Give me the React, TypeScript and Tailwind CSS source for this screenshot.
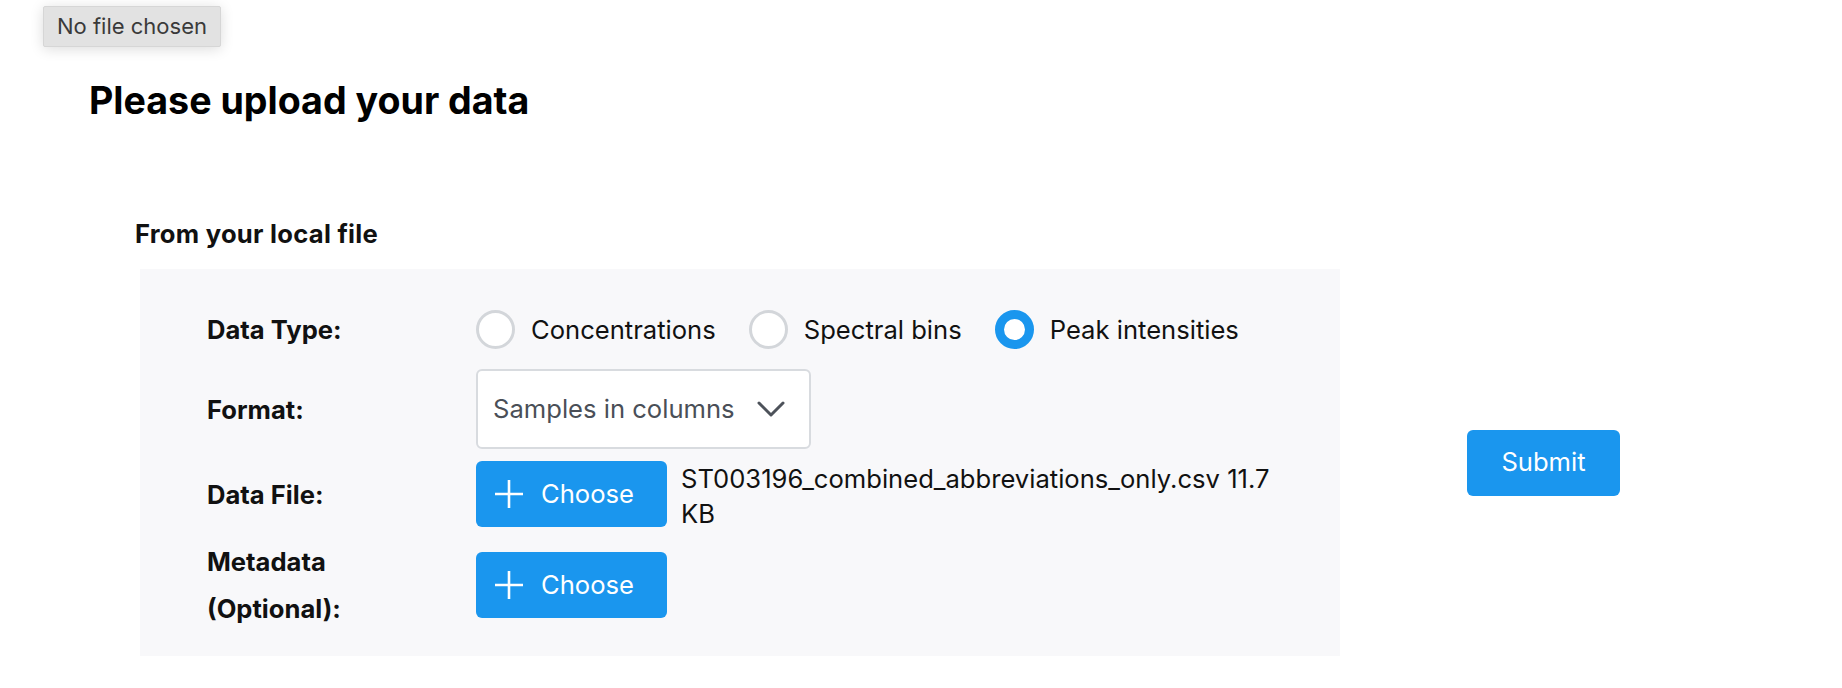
import * as React from "react";

const DATA_TYPES = ["Concentrations", "Spectral bins", "Peak intensities"];

function Radio({ label, checked }: { label: string; checked?: boolean }) {
  return (
    <label className="flex items-center gap-[16px]">
      <span
        className={
          checked
            ? "h-[39px] w-[39px] shrink-0 rounded-full border-[9px] border-[#1a96ee] bg-white"
            : "h-[39px] w-[39px] shrink-0 rounded-full border-[3px] border-[#d3d6da] bg-white"
        }
      />
      <span className="text-[25.6px] leading-[39px] text-[#111]">{label}</span>
    </label>
  );
}

function ChooseButton() {
  return (
    <button className="flex h-[66px] w-[191px] shrink-0 items-center rounded-[6px] bg-[#1a96ee] pl-[18px] text-white">
      <svg width="30" height="30" viewBox="0 0 30 30" fill="none" stroke="currentColor" strokeWidth="2.6">
        <path d="M15 1v28M1 15h28" />
      </svg>
      <span className="ml-[17px] text-[25.6px] leading-none">Choose</span>
    </button>
  );
}

function Row({ label, children, className = "" }: { label: string; children: React.ReactNode; className?: string }) {
  return (
    <div className={`flex items-center ${className}`}>
      <div className="w-[269px] shrink-0">
        <span className="block max-w-[200px] text-[25.6px] font-bold leading-[47px] text-[#111]">{label}</span>
      </div>
      {children}
    </div>
  );
}

export default function App() {
  return (
    <div className="min-h-screen bg-white font-['Inter','Liberation_Sans',sans-serif] text-black">
      <div className="pl-[43px] pt-[6px]">
        <div className="flex h-[41px] w-[178px] items-center justify-center rounded-[2px] border border-[#d6d6d6] bg-[#e2e2e2] text-[22px] text-[#3a3a3a] shadow-[0_2px_14px_rgba(0,0,0,0.14)]">
          No file chosen
        </div>
      </div>

      <h1 className="ml-[89px] mt-[31px] text-[37.6px] font-bold leading-[46px]">Please upload your data</h1>

      <h3 className="ml-[135px] mt-[90px] text-[25.6px] font-bold leading-[39px] tracking-[0.01em] text-[#111]">From your local file</h3>

      <div className="ml-[140px] mt-[16px] flex items-center">
        <div className="w-[1200px] bg-[#f8f8fa] pb-[24px] pl-[67px] pt-[40px]">
          <Row label="Data Type:" className="h-[40px]">
            <div className="flex items-center gap-[33px]">
              {DATA_TYPES.map((t) => (
                <Radio key={t} label={t} checked={t === "Peak intensities"} />
              ))}
            </div>
          </Row>

          <Row label="Format:" className="mt-[20px]">
            <div className="flex h-[80px] w-[335px] items-center rounded-[6px] border-2 border-[#d8dbdf] bg-white pl-[15px]">
              <span className="text-[25.6px] text-[#4a4f57]">Samples in columns</span>
              <svg className="ml-[21px]" width="30" height="20" viewBox="0 0 30 20" fill="none" stroke="#4d525a" strokeWidth="3" strokeLinecap="round" strokeLinejoin="round">
                <path d="M3 4l12 12 12-12" />
              </svg>
            </div>
          </Row>

          <div className="mt-[12px] flex items-start">
            <div className="flex h-[66px] w-[269px] shrink-0 items-center">
              <span className="text-[25.6px] font-bold leading-[47px] text-[#111]">Data File:</span>
            </div>
            <ChooseButton />
            <p className="ml-[14px] text-[25.6px] leading-[35px] text-[#111]">
              ST003196_combined_abbreviations_only.csv 11.7
              <br />
              KB
            </p>
          </div>

          <Row label="Metadata (Optional):" className="mt-[7px]">
            <ChooseButton />
          </Row>
        </div>

        <button className="ml-[127px] h-[66px] w-[153px] rounded-[6px] bg-[#1a96ee] text-[25.6px] text-white">Submit</button>
      </div>
    </div>
  );
}
